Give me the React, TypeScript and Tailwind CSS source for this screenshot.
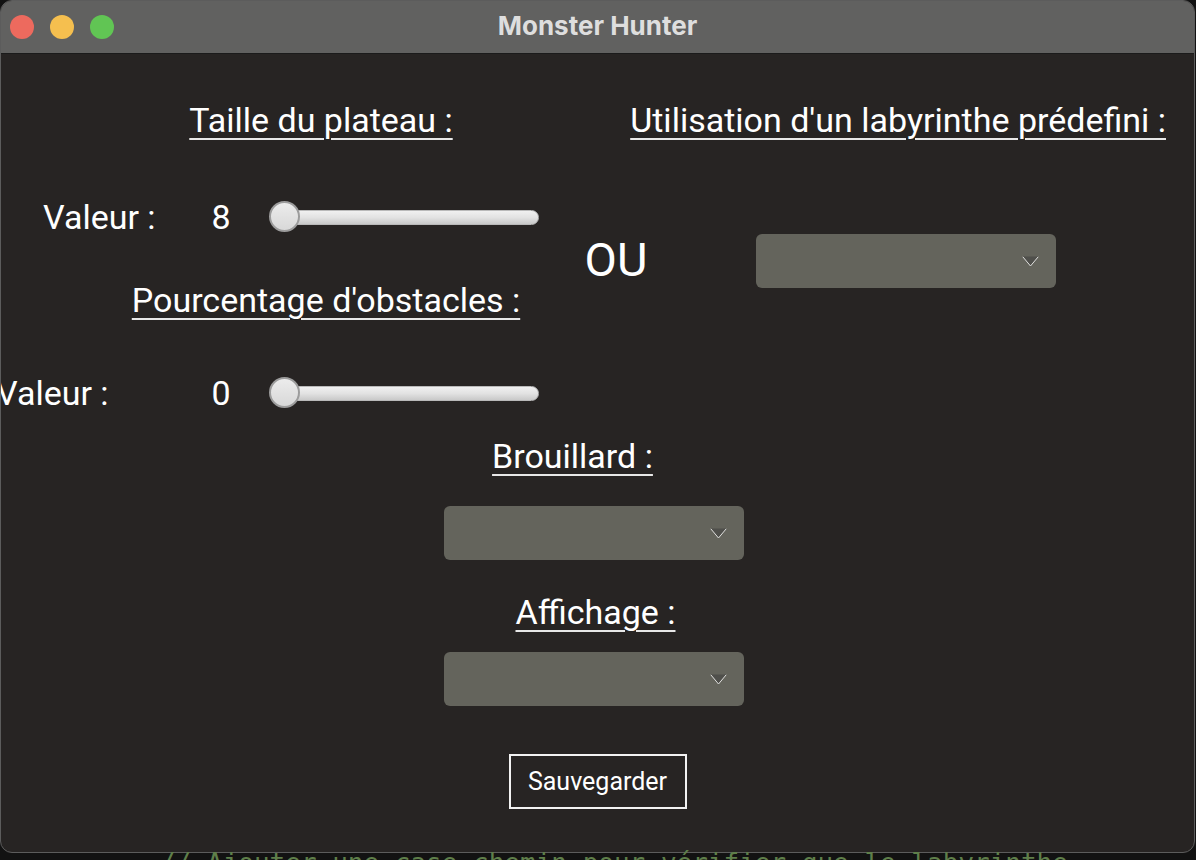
import React from 'react';

const Chevron = () => (
  <svg width="17" height="11" viewBox="0 0 17 11">
    <polygon points="0.5,0.5 16.5,0.5 8.5,10.5" fill="#4f4f4b" />
    <polyline points="0.8,0.8 8.5,10 16.2,0.8" fill="none" stroke="#e2e2e0" strokeWidth="1" />
  </svg>
);

const Dropdown = ({ className = '' }: { className?: string }) => (
  <div className={`flex h-[54px] w-[300px] items-center justify-end rounded-[6px] bg-[#64645c] pr-[17px] ${className}`}>
    <Chevron />
  </div>
);

const Slider = () => (
  <div className="relative ml-[20px] flex h-[32px] w-[268px] items-center">
    <div className="h-[15px] w-full rounded-full border border-[#b9b9b9] bg-gradient-to-b from-[#f0f0f0] via-[#e2e2e2] to-[#c9c9c9]" />
    {/* thumb sits over the track */}
    <div className="absolute left-[-2px] top-0 h-[31px] w-[31px] rounded-full border-2 border-[#9c9c9c] bg-gradient-to-b from-[#ececec] to-[#d8d8d8]" />
  </div>
);

const Heading = ({ children, className = '' }: { children: React.ReactNode; className?: string }) => (
  <div className={`whitespace-nowrap text-[34px] leading-[40px] text-white underline decoration-[#e8e8e8] decoration-2 underline-offset-[6px] ${className}`}>
    {children}
  </div>
);

const ValueRow = ({ value, labelClass }: { value: string; labelClass: string }) => (
  <div className="flex h-[40px] items-center text-[34px] leading-[40px] text-white">
    <div className="w-[190px] whitespace-nowrap">
      <span className={labelClass}>Valeur :</span>
    </div>
    <div className="w-[60px] text-center">{value}</div>
    <Slider />
  </div>
);

export default function App() {
  return (
    <div className="h-[860px] w-[1196px] overflow-hidden bg-[#121212] font-['Roboto',sans-serif]">
      <div className="flex h-[853px] w-[1195px] flex-col overflow-hidden rounded-[12px] border border-[#5c5c5c] bg-[#272423]">
        {/* Title bar */}
        <div className="flex h-[53px] shrink-0 items-center border-b border-[#1b1b1b] bg-[#616160]">
          <div className="flex w-[120px] gap-[16px] pl-[9px]">
            <span className="h-[24px] w-[24px] rounded-full bg-[#ed6a5e]" />
            <span className="h-[24px] w-[24px] rounded-full bg-[#f5bf4f]" />
            <span className="h-[24px] w-[24px] rounded-full bg-[#61c554]" />
          </div>
          <div className="flex-1 pb-[3px] text-center font-['Inter',sans-serif] text-[26px] font-bold text-[#dedede]">
            Monster Hunter
          </div>
          <div className="w-[120px]" />
        </div>

        {/* Content */}
        <div className="flex flex-col">
          <div className="flex pt-[46px]">
            <Heading className="w-[600px] pl-[40px] text-center">Taille du plateau :</Heading>
            <Heading className="ml-auto pr-[28px]">Utilisation d'un labyrinthe prédefini :</Heading>
          </div>

          <div className="mt-[57px] grid grid-cols-[560px_110px_1fr]">
            <div className="col-start-1 row-start-1">
              <ValueRow value="8" labelClass="ml-[42px]" />
            </div>
            <div className="col-start-2 row-span-2 row-start-1 self-center pt-[2px] text-center text-[47px] leading-[54px] text-white">
              OU
            </div>
            <div className="col-start-3 row-span-2 row-start-1 self-center pl-[85px] pt-[5px]">
              <Dropdown />
            </div>
            <div className="col-start-1 row-start-2 mt-[43px] pl-[90px] text-center">
              <Heading className="inline-block">Pourcentage d'obstacles :</Heading>
            </div>
            <div className="col-start-1 row-start-3 mt-[53px]">
              <ValueRow value="0" labelClass="-ml-[5px]" />
            </div>
          </div>

          <div className="flex flex-col items-center">
            <Heading className="mr-[50px] mt-[23px]">Brouillard :</Heading>
            <Dropdown className="mr-[7px] mt-[30px]" />
            <Heading className="mr-[4px] mt-[32px]">Affichage :</Heading>
            <Dropdown className="mr-[7px] mt-[20px]" />
            <button className="mt-[48px] h-[55px] w-[178px] border-2 border-[#f2f2f2] text-[25px] text-white">
              Sauvegarder
            </button>
          </div>
        </div>
      </div>
      <div className="ml-[160px] whitespace-nowrap font-['DejaVu_Sans_Mono',monospace] text-[26px] leading-[20px] text-[#5f7f4a]">
        // Ajouter une case chemin pour vérifier que le labyrinthe
      </div>
    </div>
  );
}
